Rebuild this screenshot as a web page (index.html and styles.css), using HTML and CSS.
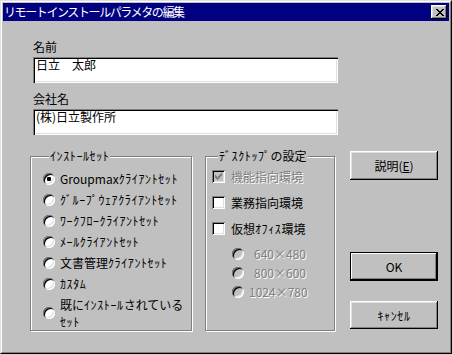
FILE: index.html
```html
<!DOCTYPE html>
<html lang="ja">
<head>
    <meta charset="UTF-8">
    <title>リモートインストールパラメタの編集</title>
    <link rel="stylesheet" href="styles.css">
</head>
<body>

    <div class="window">
        <div class="frame">
            <!-- タイトルバー -->
            <div class="titlebar">
                <span class="title">リモートインストールパラメタの編集</span>
                <button class="close" type="button">
                    <svg width="8" height="7" viewBox="0 0 8 7" shape-rendering="crispEdges">
                        <path fill="#000" d="M0 0h2v1h-2zM6 0h2v1h-2zM1 1h2v1h-2zM5 1h2v1h-2zM2 2h4v1h-4zM3 3h2v1h-2zM2 4h4v1h-4zM1 5h2v1h-2zM5 5h2v1h-2zM0 6h2v1h-2zM6 6h2v1h-2z"/>
                    </svg>
                </button>
            </div>

            <div class="dialog">
                <div class="field">
                    <div class="label">名前</div>
                    <div class="edit">日立　太郎</div>
                </div>

                <div class="field field-second">
                    <div class="label">会社名</div>
                    <div class="edit">(株)日立製作所</div>
                </div>

                <div class="lower">
                    <!-- インストールセット -->
                    <fieldset class="group group-install">
                        <legend class="kana">ｲﾝｽﾄｰﾙｾｯﾄ</legend>
                        <div class="opt"><span class="radio checked"></span><span class="opt-text">Groupmax<span class="kana">ｸﾗｲｱﾝﾄｾｯﾄ</span></span></div>
                        <div class="opt"><span class="radio"></span><span class="opt-text kana">ｸﾞﾙｰﾌﾟｳｪｱｸﾗｲｱﾝﾄｾｯﾄ</span></div>
                        <div class="opt"><span class="radio"></span><span class="opt-text kana">ﾜｰｸﾌﾛｰｸﾗｲｱﾝﾄｾｯﾄ</span></div>
                        <div class="opt"><span class="radio"></span><span class="opt-text kana">ﾒｰﾙｸﾗｲｱﾝﾄｾｯﾄ</span></div>
                        <div class="opt"><span class="radio"></span><span class="opt-text">文書管理<span class="kana">ｸﾗｲｱﾝﾄｾｯﾄ</span></span></div>
                        <div class="opt"><span class="radio"></span><span class="opt-text kana">ｶｽﾀﾑ</span></div>
                        <div class="opt opt-two"><span class="radio"></span><span class="opt-text">既に<span class="kana">ｲﾝｽﾄｰﾙ</span>されている<br><span class="kana">ｾｯﾄ</span></span></div>
                    </fieldset>

                    <!-- デスクトップの設定 -->
                    <fieldset class="group group-desk">
                        <legend><span class="kana">ﾃﾞｽｸﾄｯﾌﾟ</span>の設定</legend>
                        <div class="chk-row">
                            <span class="check disabled">
                                <svg width="7" height="7" viewBox="0 0 7 7" shape-rendering="crispEdges">
                                    <path fill="#808080" d="M6 0h1v3h-1zM5 1h1v3h-1zM4 2h1v3h-1zM0 2h1v3h-1zM1 3h1v3h-1zM3 3h1v3h-1zM2 4h1v3h-1z"/>
                                </svg>
                            </span>
                            <span class="opt-text disabled-text">機能指向環境</span>
                        </div>
                        <div class="chk-row">
                            <span class="check"></span>
                            <span class="opt-text">業務指向環境</span>
                        </div>
                        <div class="chk-row">
                            <span class="check"></span>
                            <span class="opt-text">仮想<span class="kana">ｵﾌｨｽ</span>環境</span>
                        </div>
                        <div class="sub">
                            <div class="sub-row"><span class="radio disabled"></span><span class="opt-text disabled-text pad">640<span class="times">×</span>480</span></div>
                            <div class="sub-row"><span class="radio disabled"></span><span class="opt-text disabled-text pad">800<span class="times">×</span>600</span></div>
                            <div class="sub-row"><span class="radio disabled"></span><span class="opt-text disabled-text">1024<span class="times">×</span>780</span></div>
                        </div>
                    </fieldset>

                    <!-- ボタン -->
                    <div class="buttons">
                        <button class="btn btn-help" type="button">説明(<u>E</u>)</button>
                        <button class="btn btn-ok default" type="button">OK</button>
                        <button class="btn btn-cancel" type="button"><span class="kana">ｷｬﾝｾﾙ</span></button>
                    </div>
                </div>
            </div>
        </div>
    </div>

</body>
</html>
```

FILE: styles.css
```css
/* ページ全体 */
body {
    margin: 0;
    font-family: "Noto Sans CJK JP", "Noto Sans", sans-serif;
    font-size: 12px;
    color: #000;
    background: #c0c0c0;
}

/* 半角カナ */
.kana {
    letter-spacing: 0.6px;
}

/* ウィンドウ枠 */
.window {
    width: 452px;
    height: 354px;
    box-sizing: border-box;
    border: 1px solid;
    border-color: #dfdfdf #000 #000 #dfdfdf;
    background: #c0c0c0;
}

.frame {
    height: 100%;
    box-sizing: border-box;
    border: 1px solid;
    border-color: #fff #808080 #808080 #fff;
    padding: 1px;
}

/* タイトルバー */
.titlebar {
    height: 18px;
    background: #000080;
    color: #fff;
    display: flex;
    align-items: center;
    justify-content: space-between;
    padding: 0 2px 0 1px;
}

.title {
    font-size: 12px;
    line-height: 14px;
    letter-spacing: -1.4px;
}

.close {
    width: 16px;
    height: 14px;
    padding: 0 0 0 1px;
    border: none;
    background: #c0c0c0;
    display: flex;
    align-items: center;
    justify-content: center;
    box-shadow: inset -1px -1px #000, inset 1px 1px #fff, inset -2px -2px #808080, inset 2px 2px #dfdfdf;
}

/* ダイアログ本体 */
.dialog {
    padding-left: 27px;
}

.field {
    margin-left: 3px;
    padding-top: 18px;
}

.field-second {
    padding-top: 8px;
}

.label {
    line-height: 16px;
    height: 16px;
}

.edit {
    margin-top: 2px;
    width: 305px;
    height: 26px;
    box-sizing: border-box;
    background: #fff;
    padding: 1px 3px;
    line-height: 14px;
    box-shadow: inset 1px 1px #808080, inset 2px 2px #000, inset -1px -1px #fff, inset -2px -2px #dfdfdf;
}

.lower {
    margin-top: 14px;
    display: flex;
    align-items: flex-start;
}

/* グループボックス */
.group {
    margin: 0;
    padding: 0;
    min-width: 0;
    box-sizing: border-box;
    height: 182px;
    border: 1px solid #808080;
    box-shadow: inset 1px 1px #fff, 1px 1px #fff;
}

.group legend {
    margin-left: 6px;
    padding: 0 1px;
    line-height: 14px;
    background: #c0c0c0;
}

.group-install {
    width: 162px;
    padding: 5px 0 0 12px;
}

.group-desk {
    width: 130px;
    margin-left: 13px;
    padding: 0 0 0 6px;
}

.opt {
    height: 21px;
    display: flex;
    align-items: center;
}

.opt-two {
    height: 34px;
    margin-top: 2px;
    line-height: 17.5px;
}

.opt-text {
    margin-left: 5px;
    white-space: nowrap;
}

.disabled-text {
    color: #808080;
    text-shadow: 1px 1px 0 #fff;
}

.pad {
    padding-left: 5px;
}

.times {
    display: inline-block;
    width: 12px;
    text-align: center;
}

/* ラジオボタン */
.radio {
    flex: none;
    width: 12px;
    height: 12px;
    border-radius: 50%;
    background: #fff;
    display: flex;
    align-items: center;
    justify-content: center;
    box-shadow: inset 1px 1px #808080, inset -1px -1px #fff, inset 2px 2px #000, inset -2px -2px #dfdfdf;
}

.radio.checked::after {
    content: "";
    width: 4px;
    height: 4px;
    border-radius: 1px;
    background: #000;
}

.radio.disabled {
    background: #c0c0c0;
}

/* チェックボックス */
.chk-row {
    height: 26px;
    display: flex;
    align-items: center;
}

.chk-row .opt-text {
    margin-left: 6px;
}

.check {
    flex: none;
    width: 13px;
    height: 13px;
    background: #fff;
    display: flex;
    align-items: center;
    justify-content: center;
    box-shadow: inset 1px 1px #808080, inset -1px -1px #fff, inset 2px 2px #000, inset -2px -2px #dfdfdf;
}

.check.disabled {
    background: #c0c0c0;
}

.sub {
    margin-top: 3px;
    padding-left: 20px;
}

.sub-row {
    height: 19px;
    display: flex;
    align-items: center;
}

/* ボタン */
.buttons {
    margin-left: 15px;
    display: flex;
    flex-direction: column;
}

.btn {
    width: 88px;
    height: 29px;
    padding: 0;
    border: none;
    background: #c0c0c0;
    font-family: inherit;
    font-size: 12px;
    color: #000;
    box-shadow: inset -1px -1px #000, inset 1px 1px #fff, inset -2px -2px #808080, inset 2px 2px #dfdfdf;
}

.btn.default {
    box-shadow: inset 0 0 0 1px #000, inset -2px -2px #000, inset 2px 2px #fff, inset -3px -3px #808080;
}

.btn-help {
    margin-top: 2px;
}

.btn-ok {
    margin-top: 72px;
}

.btn-cancel {
    margin-top: 20px;
    height: 28px;
}
```
